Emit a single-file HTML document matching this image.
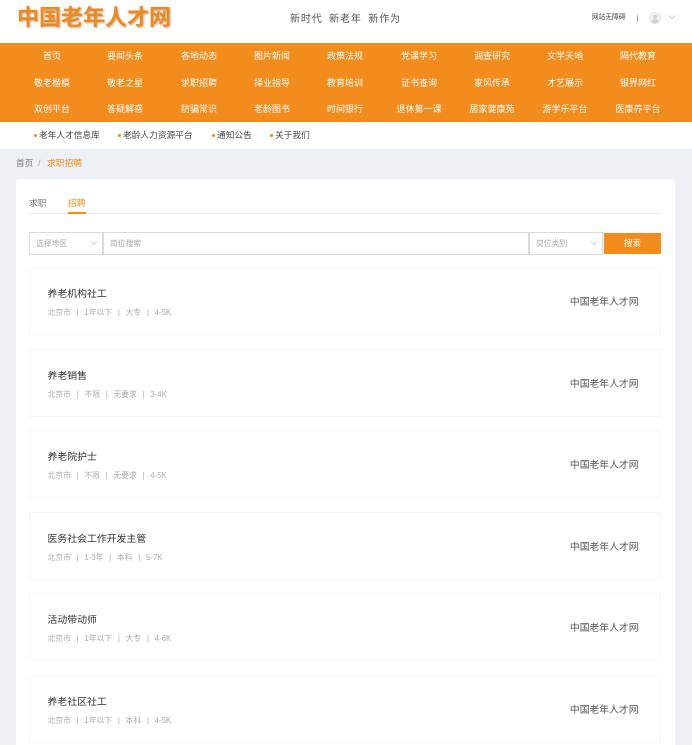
<!DOCTYPE html>
<html lang="zh">
<head>
<meta charset="utf-8">
<style>
html,body{margin:0;padding:0;width:692px;height:745px;overflow:hidden;background:#edf0f4}
#page{position:relative;width:692px;height:745px;overflow:hidden;background:#edf0f4;font-family:"Liberation Sans","Noto Sans CJK SC",sans-serif;filter:blur(.3px)}
.a{position:absolute;white-space:nowrap}
#top{left:0;top:0;width:692px;height:43px;background:#fff}
#logo{left:17px;top:3px;font-size:22px;line-height:30px;font-weight:700;color:#ee8a1c;text-shadow:1px 1px 2px rgba(110,80,40,.5)}
#slogan{left:290px;top:12px;font-size:10px;line-height:15px;color:#555;letter-spacing:.85px;word-spacing:3px}
#nav{left:0;top:43px;width:692px;height:79px;background:#f28c1c}
.n{position:absolute;width:74px;text-align:center;font-size:9px;line-height:12px;color:#fff;white-space:nowrap}
#sub{left:0;top:122px;width:692px;height:27px;background:#fff}
.s{position:absolute;top:7px;font-size:8.700px;line-height:13px;color:#444;white-space:nowrap}
.s:before{content:"";position:absolute;left:-5px;top:5px;width:3px;height:3px;border-radius:50%;background:#f28c1c}
#panel{left:16px;top:179px;width:659px;height:566px;background:#fff;border-radius:4px 4px 0 0}
.field{position:absolute;top:232px;height:23px;box-sizing:border-box;background:#fff;border:1px solid #dadada;font-size:7.800px;line-height:21px;color:#aaa;text-indent:6px}
.card{position:absolute;left:29px;width:632px;height:68px;box-sizing:border-box;background:#fff;border:1px solid #f4f5f6;border-radius:2px}
.t{position:absolute;left:17.500px;top:19.500px;font-size:9.900px;line-height:14px;color:#333;white-space:nowrap}
.m{position:absolute;left:17.500px;top:38px;font-size:7.800px;line-height:13px;color:#aaa;white-space:pre;word-spacing:.7px}
.c{position:absolute;right:21.500px;top:28px;font-size:9.800px;line-height:14px;color:#555;white-space:nowrap}
svg{position:absolute;display:block}
</style>
</head>
<body>
<div id="page">
<div class="a" id="top"></div>
<div class="a" id="logo">中国老年人才网</div>
<div class="a" id="slogan">新时代 新老年 新作为</div>
<div class="a" style="left:592px;top:12px;font-size:6.700px;line-height:12px;color:#444">网站无障碍</div>
<div class="a" style="left:637px;top:15px;width:1px;height:7px;background:#aaa"></div>
<svg style="left:649px;top:12px" width="12" height="12" viewBox="0 0 12 12"><circle cx="6" cy="6" r="5.600" fill="#f1f1f1" stroke="#ddd" stroke-width=".6"/><circle cx="6" cy="4.600" r="2" fill="#d2d2d2"/><path d="M2.400 10c.5-2.300 2-3.200 3.600-3.200S9.100 7.700 9.600 10a5.400 5.400 0 0 1-7.200 0z" fill="#d2d2d2"/></svg>
<svg style="left:668px;top:14px" width="8" height="6" viewBox="0 0 8 6"><path d="M1 1.500L4 4.500L7 1.500" fill="none" stroke="#bbb" stroke-width=".8"/></svg>

<div class="a" id="nav">
<div class="n" style="left:15px;top:7px">首页</div>
<div class="n" style="left:88px;top:7px">要闻头条</div>
<div class="n" style="left:162px;top:7px">各地动态</div>
<div class="n" style="left:235px;top:7px">图片新闻</div>
<div class="n" style="left:308px;top:7px">政策法规</div>
<div class="n" style="left:382px;top:7px">党课学习</div>
<div class="n" style="left:455px;top:7px">调查研究</div>
<div class="n" style="left:528px;top:7px">文学天地</div>
<div class="n" style="left:601px;top:7px">隔代教育</div>
<div class="n" style="left:15px;top:33.500px">敬老楷模</div>
<div class="n" style="left:88px;top:33.500px">敬老之星</div>
<div class="n" style="left:162px;top:33.500px">求职招聘</div>
<div class="n" style="left:235px;top:33.500px">择业指导</div>
<div class="n" style="left:308px;top:33.500px">教育培训</div>
<div class="n" style="left:382px;top:33.500px">证书查询</div>
<div class="n" style="left:455px;top:33.500px">家风传承</div>
<div class="n" style="left:528px;top:33.500px">才艺展示</div>
<div class="n" style="left:601px;top:33.500px">银界网红</div>
<div class="n" style="left:15px;top:60px">双创平台</div>
<div class="n" style="left:88px;top:60px">答疑解惑</div>
<div class="n" style="left:162px;top:60px">防骗常识</div>
<div class="n" style="left:235px;top:60px">老龄图书</div>
<div class="n" style="left:308px;top:60px">时间银行</div>
<div class="n" style="left:382px;top:60px">退休第一课</div>
<div class="n" style="left:455px;top:60px">居家健康苑</div>
<div class="n" style="left:528px;top:60px">游学乐平台</div>
<div class="n" style="left:601px;top:60px">医康养平台</div>
</div>

<div class="a" id="sub">
<div class="s" style="left:39px">老年人才信息库</div>
<div class="s" style="left:123px">老龄人力资源平台</div>
<div class="s" style="left:217px">通知公告</div>
<div class="s" style="left:275px">关于我们</div>
</div>

<div class="a" style="left:16px;top:157px;font-size:8.600px;line-height:13px;color:#777">首页</div>
<div class="a" style="left:38px;top:157px;font-size:9px;line-height:13px;color:#aaa">/</div>
<div class="a" style="left:47px;top:157px;font-size:8.800px;line-height:13px;color:#f28c1c">求职招聘</div>

<div class="a" id="panel"></div>
<div class="a" style="left:29px;top:197px;font-size:8.800px;line-height:13px;color:#777">求职</div>
<div class="a" style="left:68px;top:197px;font-size:8.800px;line-height:13px;color:#f28c1c">招聘</div>
<div class="a" style="left:29px;top:213px;width:632px;height:1px;background:#e8eaee"></div>
<div class="a" style="left:68px;top:212px;width:18px;height:2px;background:#f28c1c"></div>

<div class="field" style="left:29px;width:74px">选择地区</div>
<svg style="left:90px;top:240px" width="8" height="6" viewBox="0 0 8 6"><path d="M1 1.500L4 4.500L7 1.500" fill="none" stroke="#ccc" stroke-width=".8"/></svg>
<div class="field" style="left:103px;width:426px">岗位搜索</div>
<div class="field" style="left:529px;width:74px">岗位类别</div>
<svg style="left:590px;top:240px" width="8" height="6" viewBox="0 0 8 6"><path d="M1 1.500L4 4.500L7 1.500" fill="none" stroke="#ccc" stroke-width=".8"/></svg>
<div class="a" style="left:604px;top:233px;width:57px;height:21px;background:#f28c1c;color:#fff;font-size:8.500px;line-height:21px;text-align:center">搜索</div>

<div class="card" style="top:267px"><div class="t">养老机构社工</div><div class="m">北京市  |  1年以下  |  大专  |  4-5K</div><div class="c">中国老年人才网</div></div>
<div class="card" style="top:349px"><div class="t">养老销售</div><div class="m">北京市  |  不限  |  无要求  |  3-4K</div><div class="c">中国老年人才网</div></div>
<div class="card" style="top:430px"><div class="t">养老院护士</div><div class="m">北京市  |  不限  |  无要求  |  4-5K</div><div class="c">中国老年人才网</div></div>
<div class="card" style="top:512px"><div class="t">医务社会工作开发主管</div><div class="m">北京市  |  1-3年  |  本科  |  5-7K</div><div class="c">中国老年人才网</div></div>
<div class="card" style="top:593px"><div class="t">活动带动师</div><div class="m">北京市  |  1年以下  |  大专  |  4-6K</div><div class="c">中国老年人才网</div></div>
<div class="card" style="top:675px"><div class="t">养老社区社工</div><div class="m">北京市  |  1年以下  |  本科  |  4-5K</div><div class="c">中国老年人才网</div></div>
</div>
</body>
</html>
